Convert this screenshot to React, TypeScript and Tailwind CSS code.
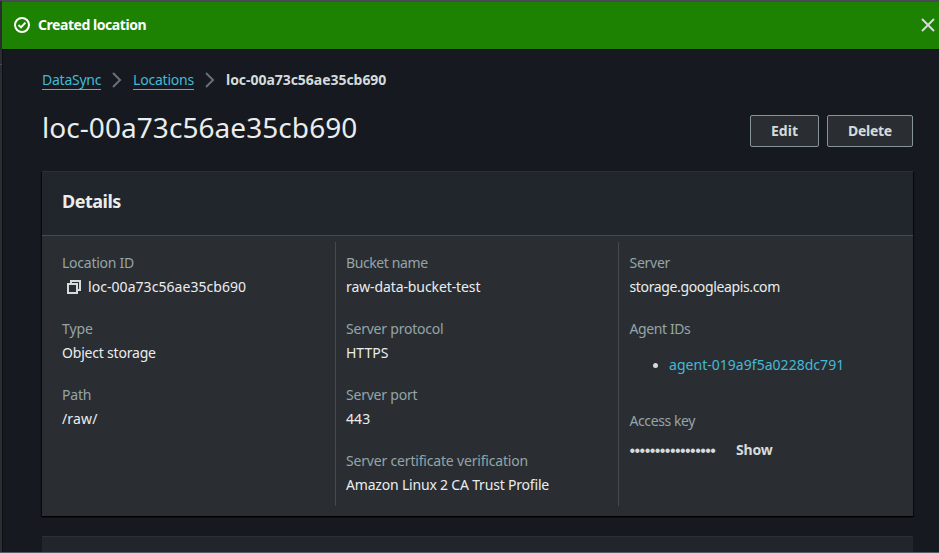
import type { ReactNode } from "react";

function Field({ label, labelClass, children }: { label: string; labelClass: string; children: ReactNode }) {
  return (
    <div className="flex flex-col items-start gap-[2px]">
      <div className={`h-[22px] text-[#95a5a6] ${labelClass}`}>{label}</div>
      {children}
    </div>
  );
}

function Value({ className, children }: { className: string; children: ReactNode }) {
  return <div className={`h-[22px] text-[#eaeded] ${className}`}>{children}</div>;
}

function Chevron({ className }: { className: string }) {
  return (
    <svg className={`h-4 w-[10px] shrink-0 ${className}`} viewBox="0 0 10 16" fill="none" stroke="#687078" strokeWidth="2">
      <path d="M1 1l7 7-7 7" />
    </svg>
  );
}

export default function App() {
  return (
    <div className="flex h-[553px] w-[939px] flex-col overflow-hidden border-t border-b border-t-[#494b59] border-b-[#545b64] bg-[#16191f] font-['Noto_Sans',sans-serif] text-[14px] leading-[22px] whitespace-nowrap">
      <div className="flex min-h-0 flex-1">
        <div className="w-[2px] shrink-0 bg-[#2a2e33]">
          <div className="mt-[63px] h-px bg-[#444a51]" />
        </div>
        <div className="flex min-w-0 flex-1 flex-col border-l border-[#0d0f12]">
          <header className="-ml-px flex h-[48px] shrink-0 items-center border-t border-b border-t-[#1d6d05] border-b-[#1d8102] bg-[#1d8102] text-white shadow-[0_1px_0_0_#0b0d10]">
            <svg className="ml-3 h-4 w-4" viewBox="0 0 16 16" fill="none" stroke="currentColor" strokeWidth="2">
              <circle cx="8" cy="8" r="7" />
              <path d="M4.5 8l2.5 2.4 4.4-4.8" />
            </svg>
            <span className="ml-2 font-bold tracking-[-0.45px]">Created location</span>
            <svg className="mr-1 ml-auto h-[14px] w-[14px]" viewBox="0 0 14 14" fill="none" stroke="#d5dbdb" strokeWidth="2">
              <path d="M1 1l12 12M13 1L1 13" />
            </svg>
          </header>
          <main className="mr-[26px] ml-[39px] flex flex-col">
            <nav className="mt-5 flex h-[22px] items-center text-[#44b9d6]">
              <a className="-mt-px h-[21px] w-[59px] border-b border-[#44b9d6] tracking-[-0.25px]">DataSync</a>
              <Chevron className="ml-[11px]" />
              <a className="-mt-px ml-[11px] h-[21px] w-[61px] border-b border-[#44b9d6] tracking-[-0.2px]">Locations</a>
              <Chevron className="ml-[11px]" />
              <b className="ml-[11px] tracking-[-0.04px] text-[#d5dbdb]">loc-00a73c56ae35cb690</b>
            </nav>
            <div className="mt-[18px] flex h-[42px] items-start">
              <h1 className="text-[28px] leading-[36px] tracking-[0.06px] text-[#eaeded]">loc-00a73c56ae35cb690</h1>
              <div className="mt-[6px] ml-auto flex gap-2 font-bold text-[#d5dbdb]">
                <button className="h-8 w-[69px] rounded-[2px] border border-[#879596] bg-[#2a2e33]">Edit</button>
                <button className="h-8 w-[86px] rounded-[2px] border border-[#879596] bg-[#2a2e33] tracking-[-0.3px]">Delete</button>
              </div>
            </div>
            <section className="mt-[20px] flex h-[345px] flex-col border-t border-[#2c3036] bg-[#2a2e33] shadow-[0_1px_1px_0_#000,1px_1px_1px_0_#0008,-1px_1px_1px_0_#0008]">
              <h2 className="h-[64px] shrink-0 border-b border-[#444a51] bg-[#21252c] pt-[18px] pl-5 text-[18px] leading-[22px] font-bold tracking-[-0.5px] text-[#eaeded]">Details</h2>
              <div className="mr-[11px] ml-[10px] mt-[6px] grid h-[264px] grid-cols-[283px_283px_1fr]">
                <div className="flex flex-col gap-5 px-[10px] pt-[10px]">
                  <Field label="Location ID" labelClass="tracking-[-0.25px]">
                    <Value className="flex items-center tracking-[0.05px]">
                      <svg className="mr-[7px] ml-[5px] h-[14px] w-[14px]" viewBox="0 0 14 14" fill="none" stroke="#d5dbdb" strokeWidth="2">
                        <path d="M1 4h9v9H1zM4 4V1h9v9h-3" />
                      </svg>
                      loc-00a73c56ae35cb690
                    </Value>
                  </Field>
                  <Field label="Type" labelClass="tracking-[-0.1px]">
                    <Value className="tracking-[-0.2px]">Object storage</Value>
                  </Field>
                  <Field label="Path" labelClass="tracking-[-0.2px]">
                    <Value className="tracking-[0.15px]">/raw/</Value>
                  </Field>
                </div>
                <div className="flex flex-col gap-5 border-l border-[#444a51] px-[10px] pt-[10px]">
                  <Field label="Bucket name" labelClass="tracking-[-0.4px]">
                    <Value className="tracking-[-0.1px]">raw-data-bucket-test</Value>
                  </Field>
                  <Field label="Server protocol" labelClass="tracking-[-0.22px]">
                    <Value className="tracking-[0px]">HTTPS</Value>
                  </Field>
                  <Field label="Server port" labelClass="tracking-[-0.22px]">
                    <Value className="tracking-[0.1px]">443</Value>
                  </Field>
                  <Field label="Server certificate verification" labelClass="tracking-[-0.18px]">
                    <Value className="tracking-[-0.19px]">Amazon Linux 2 CA Trust Profile</Value>
                  </Field>
                </div>
                <div className="flex flex-col border-l border-[#444a51] pt-[10px] pl-[10.5px]">
                  <Field label="Server" labelClass="tracking-[-0.25px]">
                    <Value className="tracking-[-0.36px]">storage.googleapis.com</Value>
                  </Field>
                  <div className="mt-5">
                    <Field label="Agent IDs" labelClass="tracking-[-0.4px]">
                      <div className="mt-3 flex h-[22px] items-center pl-[23.5px]">
                        <span className="mr-[11px] h-[5px] w-[5px] rounded-full bg-[#d5dbdb]" />
                        <a className="tracking-[0.03px] text-[#44b9d6]">agent-019a9f5a0228dc791</a>
                      </div>
                    </Field>
                  </div>
                  <div className="mt-[34px]">
                    <Field label="Access key" labelClass="tracking-[-0.4px]">
                      <div className="mt-[5px] flex h-[22px] items-center text-[#d5dbdb]">
                        <span className="mt-[2px] w-[86px] font-['Liberation_Sans',sans-serif] text-[16px] tracking-[-0.55px]">•••••••••••••••••</span>
                        <b className="ml-[20.5px] tracking-[-0.2px]">Show</b>
                      </div>
                    </Field>
                  </div>
                </div>
              </div>
            </section>
            <section className="mt-5 h-[20px] border-t border-[#2c3036] bg-[#21252c]" />
          </main>
        </div>
      </div>
    </div>
  );
}
